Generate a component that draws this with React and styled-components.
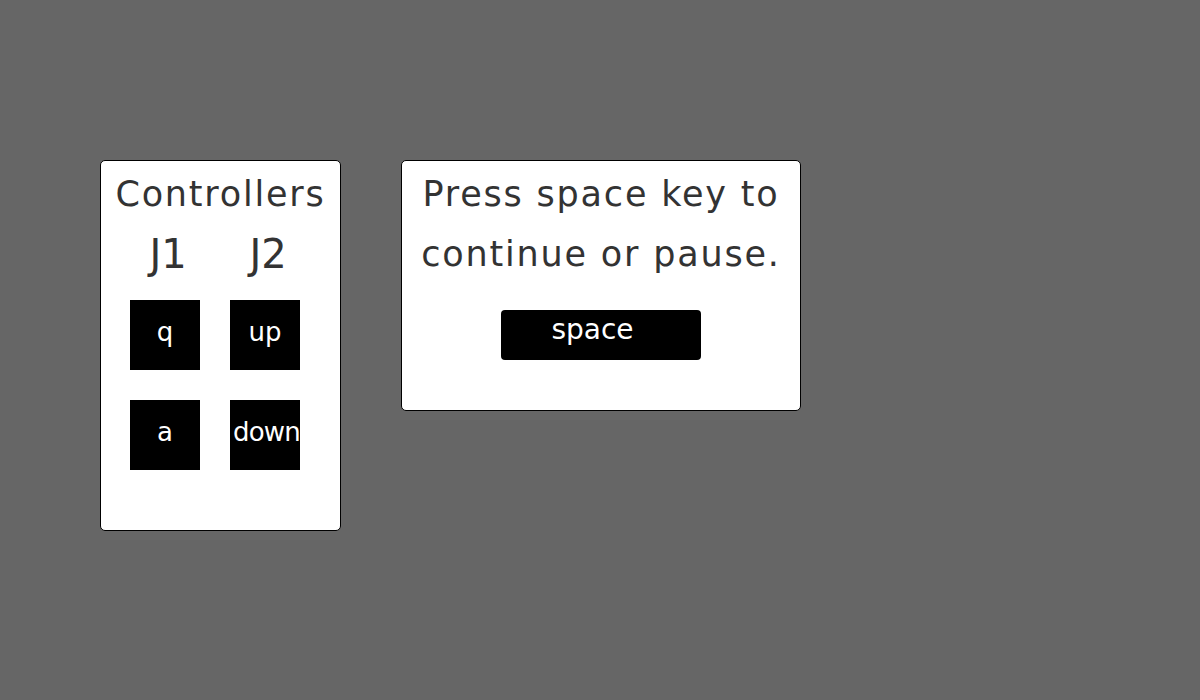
import React from "react";
import styled, { createGlobalStyle } from "styled-components";

const GlobalStyle = createGlobalStyle`
  html, body {
    margin: 0;
    padding: 0;
    background: #666;
  }

  body {
    font-family: "DejaVu Sans", Verdana, sans-serif;
    width: 1200px;
    height: 700px;
    overflow: hidden;
  }
`;

const Page = styled.div`
  display: flex;
  align-items: flex-start;
  gap: 60px;
  padding: 160px 100px;
`;

const Panel = styled.section`
  box-sizing: border-box;
  width: ${(p) => p.$width}px;
  height: ${(p) => p.$height}px;
  background: #fff;
  border: 1px solid #000;
  border-radius: 5px;
  display: flex;
  flex-direction: column;
  align-items: center;
  color: #333;
`;

const Title = styled.h1`
  margin: 3px 0 0;
  font-size: 35px;
  font-weight: normal;
  line-height: 60px;
  letter-spacing: 1.8px;
  text-align: center;
  white-space: nowrap;
`;

const Columns = styled.div`
  display: grid;
  grid-template-columns: 70px 70px;
  column-gap: 30px;
  row-gap: 30px;
  align-self: flex-start;
  margin-left: 29px;
`;

const Player = styled.div`
  font-size: 40px;
  line-height: 60px;
  padding-left: 6px;
  text-align: center;
  white-space: nowrap;
  margin-bottom: -14px;
`;

const Key = styled.div`
  width: 70px;
  height: 70px;
  background: #000;
  color: #fff;
  font-size: 26px;
  line-height: 64px;
  text-align: center;
  white-space: nowrap;
  letter-spacing: ${(p) => (p.$tight ? "-0.8px" : "0")};
  text-indent: ${(p) => (p.$tight ? "3px" : "0")};
`;

const SpaceKey = styled.div`
  box-sizing: border-box;
  width: 200px;
  height: 50px;
  margin-top: 26px;
  padding-right: 17px;
  background: #000;
  border-radius: 4px;
  color: #fff;
  font-size: 28px;
  line-height: 40px;
  text-align: center;
`;

export default function App() {
  return (
    <>
      <GlobalStyle />
      <Page>
        <Panel $width={241} $height={371}>
          <Title>Controllers</Title>
          <Columns>
            <Player>J1</Player>
            <Player>J2</Player>
            <Key>q</Key>
            <Key>up</Key>
            <Key>a</Key>
            <Key $tight>down</Key>
          </Columns>
        </Panel>
        <Panel $width={400} $height={251}>
          <Title>
            Press space key to
            <br />
            continue or pause.
          </Title>
          <SpaceKey>space</SpaceKey>
        </Panel>
      </Page>
    </>
  );
}
